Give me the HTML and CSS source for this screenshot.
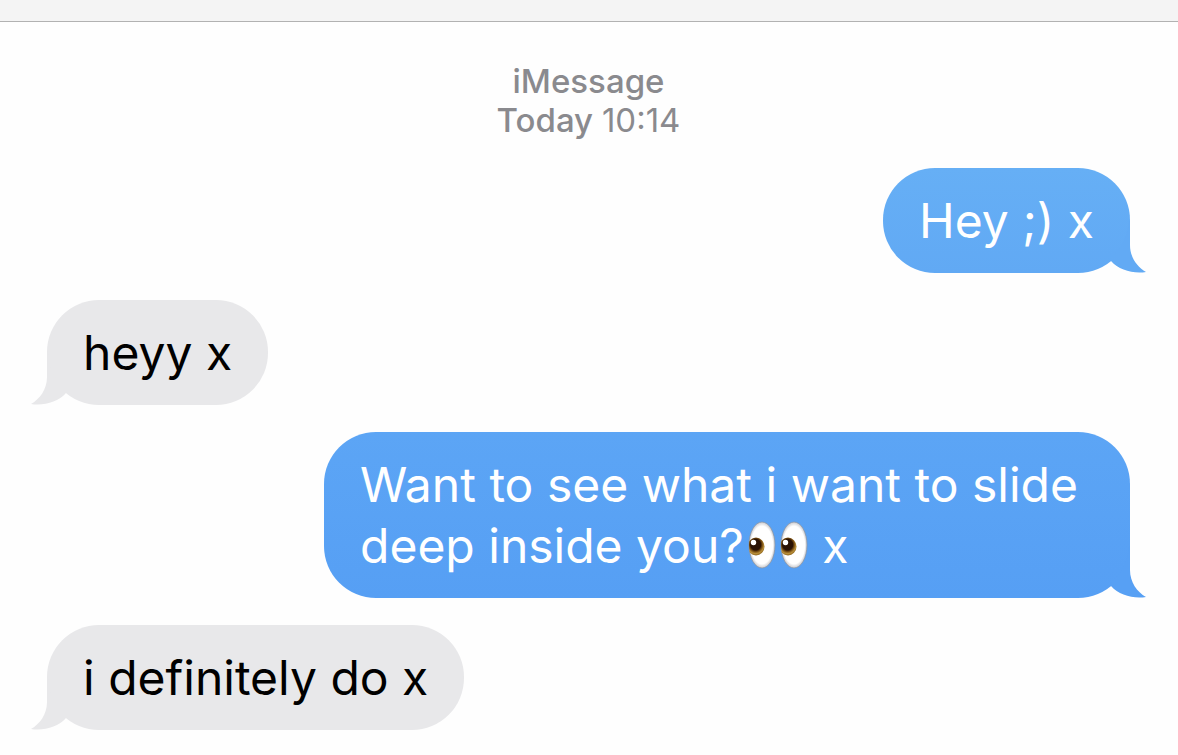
FILE: index.html
```html
<!DOCTYPE html>
<html lang="en">
<head>
<meta charset="utf-8">
<meta name="viewport" content="width=device-width, initial-scale=1">
<title>Messages</title>
<link rel="stylesheet" href="styles.css">
</head>
<body>
<svg class="defs" aria-hidden="true">
  <symbol id="tail" viewBox="0 0 40 60">
    <path d="M23 8V32C23 44 30 54 39 59C26 61 12 57 4 48L2 46C14 37 21 24 22 8Z"/>
  </symbol>
</svg>
<header class="topbar"></header>
<main class="thread">
  <div class="stamp">
    <div>iMessage</div>
    <div>Today <time class="time">10:14</time></div>
  </div>
  <div class="bubble sent first">Hey ;) x<svg class="tail" aria-hidden="true"><use href="#tail"/></svg></div>
  <div class="bubble received">heyy x<svg class="tail" aria-hidden="true"><use href="#tail"/></svg></div>
  <div class="bubble sent second">Want to see what i want to slide <span>deep inside you?<svg class="eyes" viewBox="0 0 62 48" role="img" aria-label="eyes">
      <defs>
        <radialGradient id="white" cx="50%" cy="50%" r="50%">
          <stop offset="0.82" stop-color="#fff"/>
          <stop offset="1" stop-color="#c9c9cd"/>
        </radialGradient>
        <radialGradient id="iris" cx="48%" cy="40%" r="60%">
          <stop offset="0.5" stop-color="#2a1204"/>
          <stop offset="0.62" stop-color="#6b430f"/>
          <stop offset="0.82" stop-color="#b98f3a"/>
          <stop offset="1" stop-color="#8a611c"/>
        </radialGradient>
        <clipPath id="ball"><ellipse cx="15" cy="24" rx="13" ry="23"/></clipPath>
        <g id="eye">
          <ellipse cx="15" cy="24" rx="13" ry="23" fill="url(#white)" stroke="#8d949f" stroke-width="0.7"/>
          <g clip-path="url(#ball)">
            <ellipse cx="9" cy="25.500" rx="8.500" ry="9" fill="url(#iris)"/>
            <circle cx="6.500" cy="21.500" r="2.700" fill="#fff"/>
          </g>
        </g>
      </defs>
      <use href="#eye"/>
      <use href="#eye" x="32"/>
    </svg> x</span><svg class="tail" aria-hidden="true"><use href="#tail"/></svg></div>
  <div class="bubble received">i definitely do x<svg class="tail" aria-hidden="true"><use href="#tail"/></svg></div>
</main>
</body>
</html>
```
FILE: styles.css
```css
* {
  box-sizing: border-box;
}

body {
  margin: 0;
  background: #fefefe;
  font-family: Inter, "Liberation Sans", sans-serif;
}

.defs {
  display: none;
}

.topbar {
  height: 22px;
  background: #f4f4f4;
  border-bottom: 1px solid #b2b2b2;
}

.thread {
  display: flex;
  flex-direction: column;
  align-items: flex-start;
  gap: 27px;
  padding: 40px 48px 24px 47px;
}

.stamp {
  align-self: center;
  padding-bottom: 1px;
  color: #8a8a8e;
  font-size: 33px;
  font-weight: 500;
  line-height: 39px;
  text-align: center;
}

.time {
  font-weight: 400;
}

.bubble {
  position: relative;
  max-width: 806px;
  padding: 22px 36px;
  border-radius: 52px;
  font-size: 48px;
  line-height: 61px;
}

.sent {
  align-self: flex-end;
  color: #fff;
}

.first {
  background: linear-gradient(#66aff5, #61a9f4);
  --tail: #62aaf4;
}

.second {
  background: linear-gradient(#5ca5f5, #569ff4);
  --tail: #57a0f4;
}

.received {
  background: #e8e8ea;
  color: #000;
  --tail: #e8e8ea;
}

.tail {
  position: absolute;
  bottom: 0;
  width: 40px;
  height: 60px;
  fill: var(--tail);
}

.sent .tail {
  right: -17px;
}

.received .tail {
  left: -17px;
  transform: scaleX(-1);
}

.eyes {
  width: 62px;
  height: 48px;
  margin-left: 3px;
  vertical-align: -6px;
}
```
